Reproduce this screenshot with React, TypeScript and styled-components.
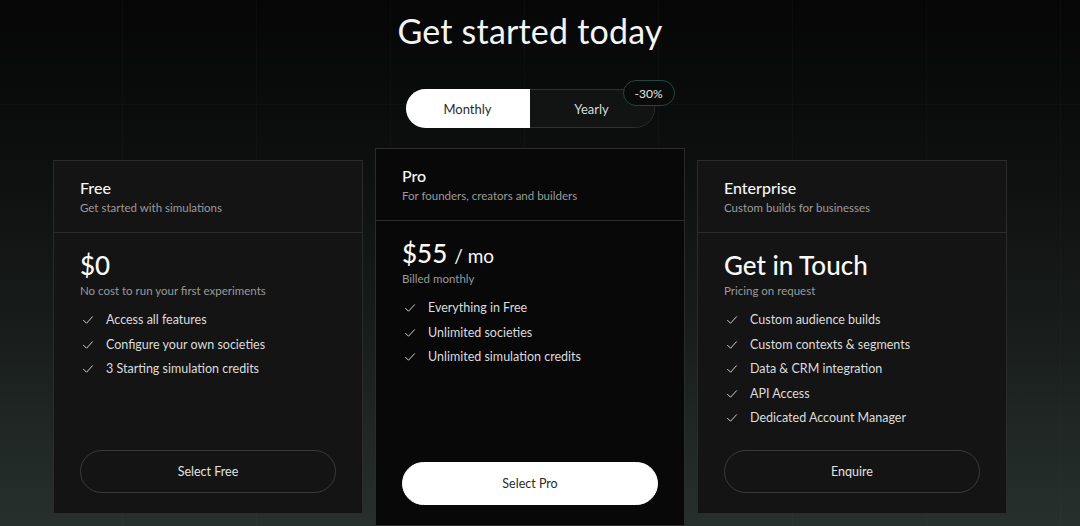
import styled, { createGlobalStyle } from "styled-components";

const GlobalStyle = createGlobalStyle`
  html, body {
    margin: 0;
    padding: 0;
    background: #0a0b0b;
  }
  * { box-sizing: border-box; }
`;

type Plan = {
  name: string;
  tagline: string;
  price: string;
  unit?: string;
  note: string;
  features: string[];
  cta: string;
  featured?: boolean;
};

const plans: Plan[] = [
  {
    name: "Free",
    tagline: "Get started with simulations",
    price: "$0",
    note: "No cost to run your first experiments",
    features: ["Access all features", "Configure your own societies", "3 Starting simulation credits"],
    cta: "Select Free",
  },
  {
    name: "Pro",
    tagline: "For founders, creators and builders",
    price: "$55",
    unit: "/ mo",
    note: "Billed monthly",
    features: ["Everything in Free", "Unlimited societies", "Unlimited simulation credits"],
    cta: "Select Pro",
    featured: true,
  },
  {
    name: "Enterprise",
    tagline: "Custom builds for businesses",
    price: "Get in Touch",
    note: "Pricing on request",
    features: [
      "Custom audience builds",
      "Custom contexts & segments",
      "Data & CRM integration",
      "API Access",
      "Dedicated Account Manager",
    ],
    cta: "Enquire",
  },
];

const Check = () => (
  <svg width="12" height="12" viewBox="0 0 24 24" fill="none" stroke="currentColor" strokeWidth="2" strokeLinecap="round" strokeLinejoin="round">
    <path d="M3 12.5l6 6L21 5.5" />
  </svg>
);

const App: React.FC = () => {
  return (
    <StylePage>
      <GlobalStyle />
      <Title>Get started today</Title>
      <Toggle>
        <ToggleOption $active>Monthly</ToggleOption>
        <ToggleOption>Yearly</ToggleOption>
        <Badge>-30%</Badge>
      </Toggle>
      <Cards>
        {plans.map(plan => (
          <Card key={plan.name} $featured={plan.featured}>
            <CardHeader>
              <PlanName>{plan.name}</PlanName>
              <Tagline>{plan.tagline}</Tagline>
            </CardHeader>
            <CardBody>
              <Price>
                {plan.price}
                {plan.unit && <Unit>{plan.unit}</Unit>}
              </Price>
              <Note>{plan.note}</Note>
              <Features>
                {plan.features.map(f => (
                  <Feature key={f}>
                    <Check />
                    <span>{f}</span>
                  </Feature>
                ))}
              </Features>
              <SelectButton $primary={plan.featured}>{plan.cta}</SelectButton>
            </CardBody>
          </Card>
        ))}
      </Cards>
    </StylePage>
  );
};

const StylePage = styled.div`
  width: 1080px;
  height: 526px;
  overflow: hidden;
  padding-right: 20px;
  display: flex;
  flex-direction: column;
  align-items: center;
  font-family: "Lato", "Noto Sans", sans-serif;
  color: #f4f4f4;
  background:
    repeating-linear-gradient(90deg, transparent 0 122px, rgba(255, 255, 255, 0.02) 122px 123px, transparent 123px 134px),
    linear-gradient(180deg, transparent 0 104px, rgba(255, 255, 255, 0.022) 104px 105px, transparent 105px),
    linear-gradient(180deg, #060606 0%, #0b0c0c 22%, #151918 55%, #27302d 100%);
  > * {
    flex-shrink: 0;
  }
`;

const Title = styled.h1`
  margin: 6px 0 0;
  font-size: 34px;
  font-weight: 400;
  line-height: 49px;
  letter-spacing: 0.2px;
`;

const Toggle = styled.div`
  position: relative;
  margin-top: 34px;
  display: flex;
  width: 249px;
  height: 39px;
  border: 1px solid #2e3231;
  border-radius: 20px;
  background: #0b0c0c;
`;

const ToggleOption = styled.div<{ $active?: boolean }>`
  flex: 1;
  display: flex;
  align-items: center;
  justify-content: center;
  font-size: 13px;
  border-radius: ${p => (p.$active ? "20px 0 0 20px" : "0 20px 20px 0")};
  background: ${p => (p.$active ? "#ffffff" : "#121313")};
  color: ${p => (p.$active ? "#2a2a2a" : "#d8d8d8")};
  margin: ${p => (p.$active ? "-1px 0 -1px -1px" : "0")};
`;

const Badge = styled.div`
  position: absolute;
  top: -10px;
  right: -21px;
  width: 52px;
  height: 26px;
  border-radius: 13px;
  border: 1px solid #1d4a40;
  background: #090a0a;
  display: flex;
  align-items: center;
  justify-content: center;
  font-size: 12px;
  color: #e8e8e8;
`;

const Cards = styled.div`
  margin-top: 20px;
  display: flex;
  align-items: flex-start;
  gap: 12px;
`;

const Card = styled.div<{ $featured?: boolean }>`
  width: 310px;
  height: ${p => (p.$featured ? 378 : 354)}px;
  margin-top: ${p => (p.$featured ? 0 : 12)}px;
  background: ${p => (p.$featured ? "#080808" : "#141414")};
  border: 1px solid #2b2b2b;
  display: flex;
  flex-direction: column;
`;

const CardHeader = styled.div`
  padding: 16px 26px 16px;
  border-bottom: 1px solid #2b2b2b;
  display: flex;
  flex-direction: column;
  gap: 1px;
`;

const PlanName = styled.div`
  font-size: 16px;
  font-weight: 500;
  line-height: 22px;
  color: #f6f6f6;
`;

const Tagline = styled.div`
  font-size: 11.5px;
  line-height: 16px;
  color: #9b9b9b;
`;

const CardBody = styled.div`
  flex: 1;
  padding: 15px 26px 20px;
  display: flex;
  flex-direction: column;
`;

const Price = styled.div`
  font-size: 26px;
  font-weight: 500;
  line-height: 34px;
  color: #fafafa;
`;

const Unit = styled.span`
  font-size: 19px;
  font-weight: 400;
  line-height: 1;
  margin-left: 7px;
`;

const Note = styled.div`
  font-size: 11.5px;
  line-height: 16px;
  color: #9a9a9a;
  margin-top: 1px;
`;

const Features = styled.ul`
  list-style: none;
  margin: 12px 0 0;
  padding: 0;
  display: flex;
  flex-direction: column;
  gap: 6.5px;
`;

const Feature = styled.li`
  display: flex;
  align-items: center;
  gap: 12px;
  font-size: 12.5px;
  line-height: 18px;
  color: #dcdcdc;
  svg {
    color: #cfcfcf;
    margin-left: 2px;
    flex-shrink: 0;
  }
`;

const SelectButton = styled.button<{ $primary?: boolean }>`
  margin-top: auto;
  height: 43px;
  width: 100%;
  border-radius: 22px;
  font-family: inherit;
  font-size: 12.5px;
  cursor: pointer;
  border: 1px solid ${p => (p.$primary ? "#ffffff" : "#3a3a3a")};
  background: ${p => (p.$primary ? "#ffffff" : "transparent")};
  color: ${p => (p.$primary ? "#2a2a2a" : "#e2e2e2")};
`;

export default App;
